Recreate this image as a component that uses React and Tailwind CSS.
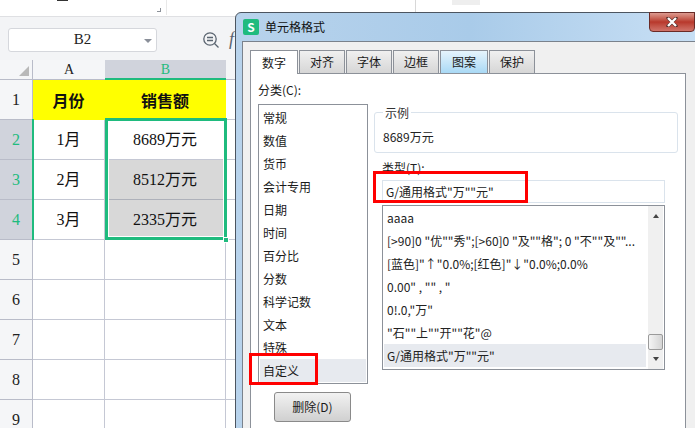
import React from "react";

const cjk = "[font-family:'Noto_Sans_CJK_SC','Noto_Sans',sans-serif]";
const serif = "[font-family:'Liberation_Serif','Noto_Sans_CJK_SC',serif]";

const categories = ["常规", "数值", "货币", "会计专用", "日期", "时间", "百分比", "分数", "科学记数", "文本", "特殊", "自定义"];
const formats = [
  'aaaa',
  '[>90]0 "优""秀";[>60]0 "及""格"; 0 "不""及""...',
  '[蓝色]"↑"0.0%;[红色]"↓"0.0%;0.0%',
  '0.00" , "" , "',
  '0!.0,"万"',
  '"石""上""开""花"@',
  'G/通用格式"万""元"',
];
const tabs = ["数字", "对齐", "字体", "边框", "图案", "保护"];

const RowHeader = ({ label, active }) => (
  <div
    className={`w-[33px] shrink-0 flex items-center justify-center border-r border-b border-[#b9bcc9] text-[16px] ${serif} ${
      active ? "bg-[#d0d3dc] text-[#1fbb7e]" : "bg-[#f5f6f8] text-[#222]"
    }`}
  >
    {label}
  </div>
);

const Amount = ({ value, unit }) => (
  <span className={`text-[16px] text-[#111] ${serif}`}>
    {value}
    {unit}
  </span>
);

const Row = ({ label, active, a, b, shaded, yellow }) => (
  <div className="flex h-10">
    <RowHeader label={label} active={active} />
    <div
      className={`w-[72px] shrink-0 flex items-center justify-center border-r border-b border-[#c5c8d4] ${
        yellow ? "bg-[#ffff00] border-[#ffff00]" : "bg-white"
      }`}
    >
      {a}
    </div>
    <div
      className={`w-[121px] shrink-0 flex items-center justify-center border-r border-b border-[#c5c8d4] ${
        yellow ? "bg-[#ffff00] border-[#ffff00]" : shaded ? "bg-[#d8d8d8] border-b-[#aeb1ba]" : "bg-white"
      }`}
    >
      {b}
    </div>
    <div className="flex-1 border-b border-[#c5c8d4] bg-white" />
  </div>
);

const Sheet = () => (
  <div className="w-[240px] h-[428px] flex flex-col overflow-hidden">
    <div className="h-[17px] shrink-0 bg-white relative border-b border-[#dfe0e3]">
      <div className="absolute left-[57px] top-0 w-[11px] h-px bg-[#333]" />
      <div className="absolute left-[157px] top-2 w-1 h-1 border-r border-b border-[#8c9199]" />
      <div className="absolute left-[166px] top-0 w-px h-[15px] bg-[#e8e8e8]" />
    </div>
    <div className="h-[43px] shrink-0 bg-[#f3f4f6] flex items-center pl-2 pt-[2px]">
      <div className={`w-[149px] h-[24px] bg-white border border-[#d5d7dc] rounded-[3px] flex items-center justify-center relative text-[15px] text-[#222] ${serif}`}>
        B2
        <div className="absolute right-[4px] top-[10px] w-0 h-0 border-x-[4px] border-x-transparent border-t-[4px] border-t-[#8a8f99]" />
      </div>
      <svg className="ml-[45px]" width="18" height="18" viewBox="0 0 18 18" fill="none" stroke="#5a6470" strokeWidth="1.3">
        <circle cx="8" cy="8" r="6.2" />
        <path d="M5 6.5h6M5 9.5h6M12.5 12.5l4 4" />
      </svg>
      <span className="ml-[9px] text-[18px] italic text-[#5a6470] [font-family:'Liberation_Serif',serif]">f</span>
    </div>
    <div className="flex h-5 shrink-0">
      <div className="w-[33px] shrink-0 bg-[#f5f6f8] border-r border-b border-[#b9bcc9] relative">
        <div className="absolute right-[3px] bottom-[3px] w-0 h-0 border-l-[10px] border-l-transparent border-b-[10px] border-b-[#b9b9b9]" />
      </div>
      <div className={`w-[72px] shrink-0 bg-[#f5f6f8] border-b border-[#b9bcc9] flex items-center justify-center text-[14px] text-[#222] ${serif}`}>A</div>
      <div className={`w-[121px] shrink-0 bg-[#d0d3dc] border-b-2 border-[#1fbb7e] flex items-center justify-center text-[14px] text-[#1fbb7e] ${serif}`}>B</div>
      <div className="flex-1 bg-[#f5f6f8] border-b border-[#b9bcc9]" />
    </div>
    <div className="relative">
      <Row
        label="1"
        yellow
        a={<span className={`text-[16px] font-bold text-[#111] ${cjk}`}>月份</span>}
        b={<span className={`text-[16px] font-bold text-[#111] ${cjk}`}>销售额</span>}
      />
      <Row label="2" active a={<Amount value="1" unit="月" />} b={<Amount value="8689" unit="万元" />} />
      <Row label="3" active shaded a={<Amount value="2" unit="月" />} b={<Amount value="8512" unit="万元" />} />
      <Row label="4" active shaded a={<Amount value="3" unit="月" />} b={<Amount value="2335" unit="万元" />} />
      <Row label="5" />
      <Row label="6" />
      <Row label="7" />
      <Row label="8" />
      <Row label="9" />
      {/* selection */}
      <div className="absolute left-[32px] top-[39px] w-[2px] h-[121px] bg-[#1fbb7e]" />
      <div className="absolute left-[105px] top-[38px] w-[122px] h-[122px] border-[3px] border-[#1fbb7e] outline outline-1 -outline-offset-4 outline-white" />
      <div className="absolute left-[223px] top-[157px] w-[6px] h-[6px] bg-[#1fbb7e] border border-white" />
    </div>
  </div>
);

const Tab = ({ label, index }) => {
  const active = index === 0;
  const blue = index === 4;
  const width = active || blue ? "w-12" : "w-[46px]";
  return (
    <div
      className={`${width} flex items-center justify-center border border-b-0 border-[#8c9199] text-[12px] text-[#1a1a1a] ${
        active
          ? "h-6 bg-white relative z-10 -mb-px"
          : blue
            ? "h-[23px] bg-gradient-to-b from-[#e6f4fc] to-[#a9d9f5] border-[#3c7fb1]"
            : "h-[23px] bg-gradient-to-b from-[#f0f0f0] to-[#d6d6d6]"
      }`}
    >
      {label}
    </div>
  );
};

const CategoryList = () => (
  <div className="w-[110px] h-[280px] bg-white border border-[#8c9199] pt-px px-px">
    {categories.map((c, i) => (
      <div
        key={c}
        className={`h-[23px] flex items-center pl-[3px] text-[12px] text-[#1a1a1a] ${
          i === 11 ? "bg-[#e7eaef]" : ""
        }`}
      >
        {c}
      </div>
    ))}
  </div>
);

const FormatList = () => (
  <div className="w-[283px] h-[165px] bg-white border border-[#8c9199] flex pl-px">
    <div className="w-[262px] shrink-0">
      {formats.map((f, i) => (
        <div
          key={f}
          className={`h-[23px] flex items-center pl-[3px] text-[12px] text-[#222] whitespace-nowrap ${
            i === 6 ? "bg-[#e7eaef]" : ""
          }`}
        >
          {f}
        </div>
      ))}
    </div>
    <div className="flex-1 ml-[2px] mr-px bg-[#f0f0f0] flex flex-col items-center py-[8px]">
      <div className="w-0 h-0 border-x-[3px] border-x-transparent border-b-[4px] border-b-[#444]" />
      <div className="mt-[116px] w-[15px] h-4 border border-[#9a9a9a] rounded-[2px] bg-gradient-to-r from-[#f4f4f4] to-[#d4d4d4]" />
      <div className="mt-auto w-0 h-0 border-x-[3px] border-x-transparent border-t-[4px] border-t-[#444]" />
    </div>
  </div>
);

const Dialog = () => (
  <div className={`absolute left-[235px] top-3 w-[470px] h-[430px] rounded-tl-[6px] border border-[#4c5560] bg-gradient-to-r from-[#b8d3ec] via-[#a9cbe9] to-[#c9e0f5] ${cjk}`}>
    <div className="h-[28px] flex items-center pl-[7px] gap-[6px]">
      <div className="w-4 h-4 rounded-[2px] bg-[#1fbb7e] flex items-center justify-center text-white text-[12px] font-bold leading-none">S</div>
      <span className="text-[12px] text-[#111]">单元格格式</span>
    </div>
    {/* close button */}
    <div className="absolute left-[413px] -top-px w-[46px] h-5 rounded-b-[4px] border border-[#6b2a26] bg-gradient-to-b from-[#dc9a90] via-[#b8382c] to-[#d0736a] flex items-center justify-center">
      <svg width="12" height="10" viewBox="0 0 12 10">
        <path d="M2 1l8 8M10 1l-8 8" stroke="#55302c" strokeWidth="3.4" fill="none" strokeLinecap="round" />
        <path d="M2 1l8 8M10 1l-8 8" stroke="#ffffff" strokeWidth="2.4" fill="none" />
      </svg>
    </div>
    <div className="ml-[6px] h-[400px] bg-[#f0f0f0] border border-[#7a828c] pt-[8px] pl-[7px]">
      <div className="flex items-end gap-px">
        {tabs.map((t, i) => (
          <Tab key={t} label={t} index={i} />
        ))}
      </div>
      <div className="w-[436px] h-[400px] bg-white border border-[#8c9199] flex pl-[7px]">
        <div className="w-[116px] shrink-0 pt-px">
          <div className="h-[29px] text-[12px] text-[#1a1a1a] flex items-center">分类(C):</div>
          <CategoryList />
          <div className="mt-2 ml-4 w-[77px] h-[30px] border border-[#8a8a8a] rounded-[3px] bg-gradient-to-b from-[#f2f2f2] to-[#d0d0d0] flex items-center justify-center text-[12px] text-[#1a1a1a]">
            删除(D)
          </div>
        </div>
        <div className="w-[304px] shrink-0 pt-[38px]">
          <div className="relative h-[41px] border border-[#dae3ec] rounded-[3px] flex items-end pl-2 pb-[6px] text-[12px] text-[#222]">
            <span className="absolute left-2 -top-[9px] bg-white px-[2px] text-[12px] text-[#333]">示例</span>
            8689万元
          </div>
          <div className="ml-2 mt-[5px] h-[20px] text-[12px] text-[#222] flex items-center">类型(T):</div>
          <div className="ml-2 mt-[2px] w-[283px] h-[23px] border border-[#dae3ec] bg-white flex items-center pl-[3px] text-[12px] text-[#222]">
            G/通用格式"万""元"
          </div>
          <div className="ml-2 mt-[2px]">
            <FormatList />
          </div>
        </div>
      </div>
    </div>
  </div>
);

export default function App() {
  return (
    <div className="relative w-[695px] h-[428px] overflow-hidden bg-white">
      <Sheet />
      {/* strip above the dialog */}
      <div className="absolute left-[415px] top-0 w-px h-3 bg-[#d8d8d8]" />
      <div className="absolute left-[452px] top-0 w-[28px] h-[5px] bg-[#eeeeee]" />
      <Dialog />
      {/* red callouts */}
      <div className="absolute left-[249px] top-[353px] w-[69px] h-[32px] border-[3px] border-[#ff0000]" />
      <div className="absolute left-[373px] top-[171px] w-[155px] h-[32px] border-[3px] border-[#ff0000]" />
    </div>
  );
}
